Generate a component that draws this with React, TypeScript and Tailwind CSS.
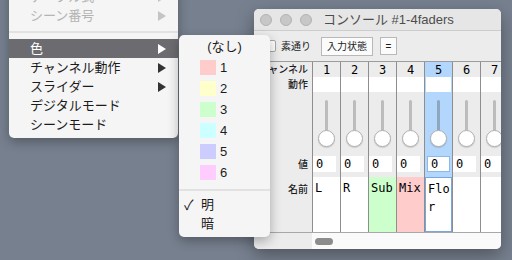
import React from "react";

const Arrow = ({ color }: { color: string }) => (
  <svg width="8" height="10" viewBox="0 0 8 10" className="shrink-0">
    <polygon points="0,0 8,5 0,10" fill={color} />
  </svg>
);

type MItem = { label: string; disabled?: boolean; arrow?: boolean; active?: boolean };

const mainItems: MItem[] = [
  { label: "テーブル式", disabled: true, arrow: true },
  { label: "シーン番号", disabled: true, arrow: true },
];
const mainItems2: MItem[] = [
  { label: "色", arrow: true, active: true },
  { label: "チャンネル動作", arrow: true },
  { label: "スライダー", arrow: true },
  { label: "デジタルモード" },
  { label: "シーンモード" },
];

const MenuRow = ({ item }: { item: MItem }) => (
  <div
    className={
      "h-[19px] flex items-center justify-between pl-[21px] pr-[12px] text-[13px] " +
      (item.active
        ? "bg-[#6b6b70] text-white"
        : item.disabled
        ? "text-[#b4b4b4]"
        : "text-[#1c1c1c]")
    }
  >
    <span>{item.label}</span>
    {item.arrow && (
      <Arrow color={item.active ? "#ffffff" : item.disabled ? "#c4c4c4" : "#333333"} />
    )}
  </div>
);

const swatches = [
  { n: "1", c: "bg-[#ffcccc]" },
  { n: "2", c: "bg-[#ffffcc]" },
  { n: "3", c: "bg-[#ccffcc]" },
  { n: "4", c: "bg-[#ccffff]" },
  { n: "5", c: "bg-[#ccccff]" },
  { n: "6", c: "bg-[#ffccff]" },
];

type Col = { n: string; name: string; nameBg?: string; sel?: boolean };
const cols: Col[] = [
  { n: "1", name: "L" },
  { n: "2", name: "R" },
  { n: "3", name: "Sub", nameBg: "bg-[#ccffcc]" },
  { n: "4", name: "Mix", nameBg: "bg-[#ffcccc]" },
  { n: "5", name: "Flor", sel: true },
  { n: "6", name: "" },
  { n: "7", name: "" },
];

const Column = ({ c }: { c: Col }) => {
  const bg = c.sel ? "bg-[#b3d6fc]" : "bg-[#ececec]";
  return (
    <div className={"w-[28px] shrink-0 border-l border-[#8e8e8e] flex flex-col font-['DejaVu_Sans_Mono',monospace] text-[12px] text-black " + bg}>
      <div className="h-[15px] flex items-center justify-center leading-none">{c.n}</div>
      <div className={"h-[15px] bg-white " + (c.sel ? "mx-[1px]" : "")}></div>
      <div className="h-[64px] flex flex-col items-center pt-[8px]">
        <div className={"w-[3px] h-[32px] rounded-sm " + (c.sel ? "bg-[#8fa6bf]" : "bg-[#bcbcbc]")}></div>
        <div className="-mt-[2px] w-[17px] h-[17px] rounded-full bg-white border border-[#b0b0b0] shadow-[0_1px_1px_rgba(0,0,0,0.15)]"></div>
      </div>
      <div className="h-[16px] flex">
        <div
          className={
            "h-[16px] w-[23px] bg-white pl-[3px] flex items-center leading-none " +
            (c.sel ? "ml-[2px] border border-[#8fb7ea]" : "")
          }
        >
          0
        </div>
      </div>
      <div className="h-[5px]"></div>
      <div
        className={
          "h-[55px] pl-[2px] pt-[2px] leading-[18px] break-all " +
          (c.nameBg ? c.nameBg : "bg-white") +
          (c.sel ? " border border-[#7aa6df]" : "")
        }
      >
        {c.name}
      </div>
    </div>
  );
};

export default function App() {
  return (
    <div className="w-[512px] h-[260px] relative overflow-hidden bg-[#77808f] font-['Liberation_Sans','Noto_Sans_CJK_JP',sans-serif]">
      {/* Console window */}
      <div className="absolute left-[254px] top-[9px] w-[247px] h-[240px] rounded-[5px] bg-[#ececec] overflow-hidden flex flex-col shadow-[0_6px_18px_rgba(0,0,0,0.35)]">
        <div className="h-[22px] shrink-0 flex items-center bg-[#e6e6e6] border-b border-[#cdcdcd] pl-[6px]">
          <div className="flex gap-[8px]">
            <div className="w-[12px] h-[12px] rounded-full bg-[#c7c7c7] border border-[#b2b2b2]"></div>
            <div className="w-[12px] h-[12px] rounded-full bg-[#c7c7c7] border border-[#b2b2b2]"></div>
            <div className="w-[12px] h-[12px] rounded-full bg-[#c7c7c7] border border-[#b2b2b2]"></div>
          </div>
          <div className="ml-[11px] text-[13px] text-[#4d4d4d] whitespace-nowrap">コンソール #1-4faders</div>
        </div>
        <div className="h-[30px] shrink-0 flex items-center pl-[10px] text-[10px] text-[#1c1c1c]">
          <div className="w-[12px] h-[12px] bg-white border border-[#a8a8a8] rounded-[2px]"></div>
          <span className="ml-[5px]">素通り</span>
          <div className="ml-[10px] h-[19px] px-[5px] flex items-center bg-[#fbfbfb] border border-[#b8b8b8]">入力状態</div>
          <div className="ml-[7px] w-[17px] h-[18px] flex items-center justify-center bg-[#fbfbfb] border border-[#b8b8b8]">=</div>
        </div>
        <div className="flex-1 flex flex-col border-t border-[#9c9c9c]">
          <div className="flex overflow-hidden">
            <div className="w-[58px] shrink-0 flex flex-col text-[10px] font-medium text-[#1c1c1c] text-right pr-[4px]">
              <div className="h-[15px] flex items-center justify-end whitespace-nowrap">チャンネル</div>
              <div className="h-[15px] flex items-center justify-end">動作</div>
              <div className="h-[64px]"></div>
              <div className="h-[16px] flex items-center justify-end">値</div>
              <div className="h-[5px]"></div>
              <div className="h-[55px] pt-[5px]">名前</div>
            </div>
            {cols.map((c) => (
              <Column key={c.n} c={c} />
            ))}
          </div>
          <div className="h-[17px] flex border-t border-[#a8a8a8]">
            <div className="w-[58px] shrink-0 bg-[#ececec]"></div>
            <div className="flex-1 bg-[#fafafa] flex items-center pl-[3px]">
              <div className="w-[18px] h-[7px] rounded-full bg-[#8c8c8c]"></div>
            </div>
          </div>
        </div>
      </div>

      {/* Main menu */}
      <div className="absolute left-[9px] top-[-13px] w-[169px] bg-[#f5f5f5] rounded-b-[5px] pb-[4px] shadow-[0_4px_12px_rgba(0,0,0,0.3)]">
        {mainItems.map((it) => (
          <MenuRow key={it.label} item={it} />
        ))}
        <div className="h-[14px] pt-[6px]">
          <div className="h-[2px] bg-[#e2e2e2]"></div>
        </div>
        {mainItems2.map((it) => (
          <MenuRow key={it.label} item={it} />
        ))}
      </div>

      {/* Sub menu */}
      <div className="absolute left-[179px] top-[35px] w-[91px] bg-[#f5f5f5] rounded-[5px] pt-[1px] pb-[4px] text-[13px] text-[#1c1c1c] shadow-[0_4px_12px_rgba(0,0,0,0.3)]">
        <div className="h-[21px] flex items-center justify-center">(なし)</div>
        {swatches.map((s) => (
          <div key={s.n} className="h-[21px] flex items-center pl-[21px]">
            <div className={"w-[16px] h-[15px] " + s.c}></div>
            <span className="ml-[4px]">{s.n}</span>
          </div>
        ))}
        <div className="h-[12px] pt-[6px]">
          <div className="h-[2px] bg-[#e2e2e2]"></div>
        </div>
        <div className="h-[19px] flex items-center">
          <span className="w-[22px] pl-[5px] text-[14px] leading-none">✓</span>
          <span>明</span>
        </div>
        <div className="h-[19px] flex items-center">
          <span className="w-[22px]"></span>
          <span>暗</span>
        </div>
      </div>
    </div>
  );
}
